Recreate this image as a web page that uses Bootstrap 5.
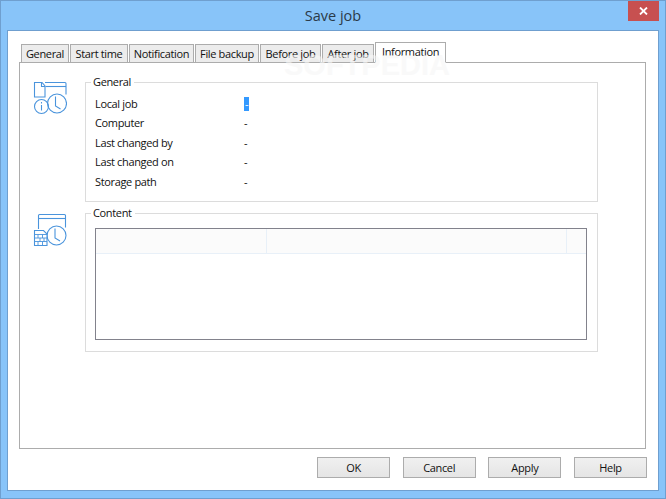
<!DOCTYPE html>
<html lang="en">
<head>
<meta charset="utf-8">
<title>Save job</title>
<link href="https://cdn.jsdelivr.net/npm/bootstrap@5.3.0/dist/css/bootstrap.min.css" rel="stylesheet">
<style>
html,body{margin:0;width:666px;height:499px;overflow:hidden;background:#88c4f9}
body{font-family:"Open Sans","Noto Sans",sans-serif;font-size:11px;color:#111;line-height:14px;letter-spacing:-.35px}
.win{position:relative;width:666px;height:499px;border:1px solid #6f9fcf;background:#88c4f9;display:flex;flex-direction:column}
.caption{height:29px;flex:none;display:flex;align-items:center;justify-content:center;font-size:14.5px;color:#2b3a48;letter-spacing:0}
.closex{position:absolute;top:0;right:6px;width:31px;height:20px;background:#c75050;display:flex;align-items:center;justify-content:center}
.client{margin:0 6px 7px 6px;flex:1;background:#fff;border:1px solid #6f9fcf;padding:12px 12px 12px 11px;display:flex;flex-direction:column;min-height:0}
.tabrow{display:flex;height:20px;padding-left:2px;flex:none;align-items:flex-end;flex-wrap:nowrap;border:0;position:relative;z-index:1;margin-bottom:-1px}
.tabrow .nav-link{height:19px;margin:0 1px 0 0;padding:0;border:1px solid #acacac;border-radius:0;background:#ececec;color:#111;display:flex;align-items:center;justify-content:center}
.tabrow .nav-link.active{height:21px;background:#fff;border-color:#acacac;border-bottom-color:#fff;color:#111;margin:0;padding-bottom:1px}
.pane{flex:1;border:1px solid #acacac;background:#fff;padding:18px 47px 0 10px;min-height:0}
.grp{border:1px solid #dcdcdc;padding:0 10px 0 9px;margin:0;min-width:0}
.grp legend{float:none;width:auto;font-size:11px;line-height:14px;padding:0 3px 0 2px;color:#111;margin:0 0 0 -4px}
.sec1{height:127px;margin-top:-6px}
.sec2{height:146px;margin-top:4px}
.iconbox{width:55px;flex:none;padding-left:3px}
.ico1{padding-top:6px}
.ico2{padding-top:7px}
.infolist{padding-top:5px;margin:0}
.inforow{display:flex;height:19.5px;align-items:center}
.inforow dt{font-weight:400;width:149px;margin:0;flex:none}
.inforow dd{margin:0}
.sel{background:#3399ff;color:#fff;display:inline-block;width:5px;height:14px;text-align:center}
.lv{margin-top:8px;height:112px;border:1px solid #82828c;background:#fff}
.lvh{display:flex;height:25px;background:#fbfbfb;border-bottom:1px solid #e8f0f8}
.lvh span{border-right:1px solid #e8f0f8;display:block}
.c1{width:171px}.c2{width:300px}.c3{width:19px;border-right:0!important}
.btnbar{display:flex;justify-content:flex-end;gap:12.67px;padding-top:8px;flex:none;margin-right:-1px}
.btnbar .btn{width:73px;height:21px;padding:0;border:1px solid #acacac;border-radius:0;font-size:11px;line-height:19px;color:#111;letter-spacing:-.35px;background:linear-gradient(#f0f0f0,#e5e5e5)}
.wm{position:absolute;left:283px;top:45px;font-size:29px;line-height:38px;font-weight:700;color:#f6f6f6;letter-spacing:0;opacity:.6;pointer-events:none;font-family:"Liberation Sans",sans-serif;z-index:3}
</style>
</head>
<body>
<div class="win">
  <div class="caption">Save job</div>
  <div class="closex"><svg width="9" height="8" viewBox="0 0 9 8"><path d="M1 0.5 8 7.5M8 0.5 1 7.5" stroke="#fff" stroke-width="1.8"/></svg></div>
  <div class="client">
    <ul class="nav nav-tabs tabrow">
      <li class="nav-item"><a class="nav-link" style="width:48px">General</a></li>
      <li class="nav-item"><a class="nav-link" style="width:58px">Start time</a></li>
      <li class="nav-item"><a class="nav-link" style="width:65px">Notification</a></li>
      <li class="nav-item"><a class="nav-link" style="width:64px">File backup</a></li>
      <li class="nav-item"><a class="nav-link" style="width:61px">Before job</a></li>
      <li class="nav-item"><a class="nav-link" style="width:52px">After job</a></li>
      <li class="nav-item"><a class="nav-link active" style="width:71px">Information</a></li>
    </ul>
    <div class="pane">
      <div class="d-flex sec1">
        <div class="iconbox ico1">
          <svg width="34" height="34" viewBox="0 0 34 34" fill="none" stroke="#4a94dc" stroke-width="1.1">
            <path d="M1.500 1.500h7.500l3 3.500v11h-10.500z"/><path d="M8.500 1.500v4h3.500"/>
            <path d="M12 1.500h20a1 1 0 0 1 1 1v11"/><path d="M12.500 5.500h20.500"/>
            <circle cx="8.500" cy="25.500" r="7"/><path d="M8.500 24v5.500M8.500 21v1.500"/>
            <circle cx="24" cy="22.500" r="9.500"/><path d="M22.500 15.500v9.500l5 3"/>
          </svg>
        </div>
        <fieldset class="grp flex-grow-1">
          <legend>General</legend>
          <dl class="infolist">
            <div class="inforow"><dt>Local job</dt><dd><span class="sel">-</span></dd></div>
            <div class="inforow"><dt>Computer</dt><dd>-</dd></div>
            <div class="inforow"><dt>Last changed by</dt><dd>-</dd></div>
            <div class="inforow"><dt>Last changed on</dt><dd>-</dd></div>
            <div class="inforow"><dt>Storage path</dt><dd>-</dd></div>
          </dl>
        </fieldset>
      </div>
      <div class="d-flex sec2">
        <div class="iconbox ico2">
          <svg width="34" height="34" viewBox="0 0 34 34" fill="none" stroke="#4a94dc" stroke-width="1.1">
            <path d="M5.500 16V2.500a1 1 0 0 1 1-1h25a1 1 0 0 1 1 1v12"/><path d="M5.500 5.500h27"/>
            <circle cx="23.500" cy="22.500" r="9.500"/><path d="M22 15.500v9.500l5 3"/>
            <path d="M1.500 17.500h9l3.500 3.500v11.500h-12.500z" fill="#fff"/>
            <path d="M1.500 21.500h12.500M1.500 25h12.500M1.500 28.500h12.500M5 21.500v3.500M9.500 21.500v3.500M7 25v3.500M11 25v3.500M5 28.500v4M9.500 28.500v4" stroke-width=".9"/>
          </svg>
        </div>
        <fieldset class="grp flex-grow-1">
          <legend>Content</legend>
          <div class="lv">
            <div class="lvh"><span class="c1"></span><span class="c2"></span><span class="c3"></span></div>
          </div>
        </fieldset>
      </div>
    </div>
    <div class="btnbar">
      <button type="button" class="btn">OK</button>
      <button type="button" class="btn">Cancel</button>
      <button type="button" class="btn">Apply</button>
      <button type="button" class="btn">Help</button>
    </div>
  </div>
  <div class="wm">SOFTPEDIA</div>
</div>
<script src="https://cdn.jsdelivr.net/npm/bootstrap@5.3.0/dist/js/bootstrap.bundle.min.js"></script>
</body>
</html>
